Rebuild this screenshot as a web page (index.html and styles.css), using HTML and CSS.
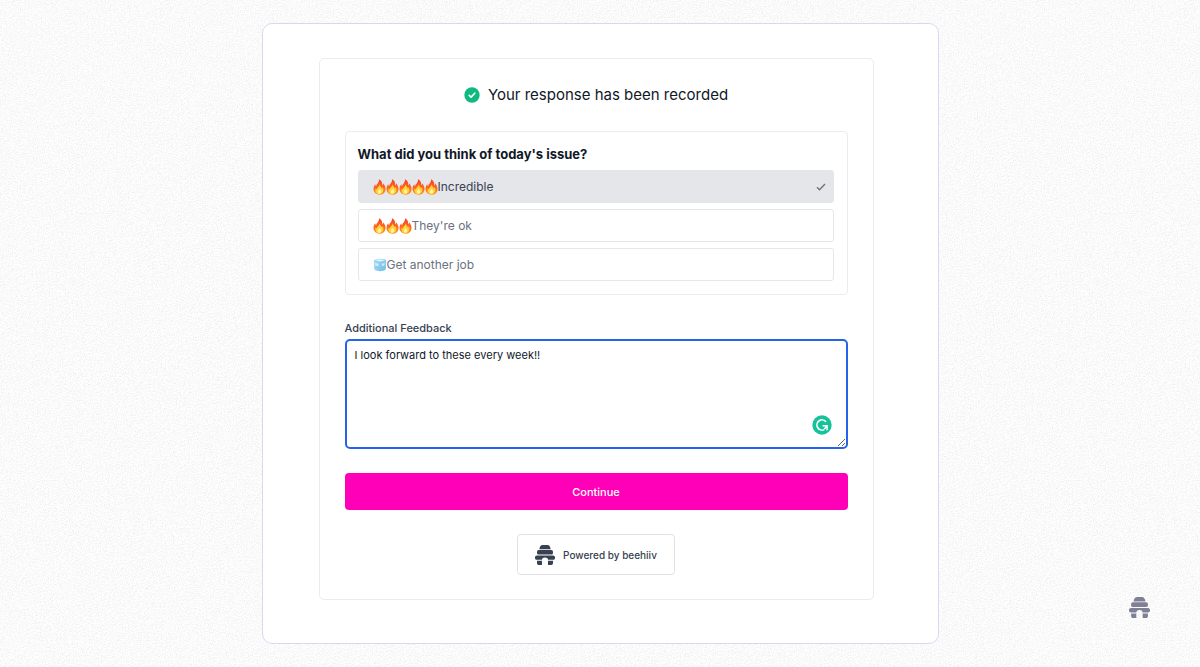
FILE: index.html
```html
<!DOCTYPE html>
<html lang="en">
<head>
    <meta charset="UTF-8">
    <meta name="viewport" content="width=device-width, initial-scale=1.0">
    <title>Your response has been recorded</title>
    <link rel="stylesheet" href="styles.css">
</head>
<body>

    <!-- Shared icons -->
    <svg class="sprite" aria-hidden="true">
        <defs>
            <linearGradient id="flame-fill" x1="0" y1="0" x2="0" y2="1">
                <stop offset="0" stop-color="#f5402c"/>
                <stop offset="0.6" stop-color="#ff6a1f"/>
                <stop offset="1" stop-color="#ff9b1c"/>
            </linearGradient>
            <linearGradient id="ice-fill" x1="0" y1="0" x2="1" y2="1">
                <stop offset="0" stop-color="#c5ebfa"/>
                <stop offset="1" stop-color="#69b9e8"/>
            </linearGradient>
        </defs>
        <symbol id="flame" viewBox="0 0 13 16">
            <path fill="url(#flame-fill)" d="M6 0.3C9 1.8 9.5 4.3 9.2 6.4C10 6 10.2 5 10.1 4.2C11.8 6 12.7 8.2 12.5 10.4C12.2 13.7 9.6 15.7 6.5 15.7C3.2 15.7 0.7 13.5 0.5 10.3C0.4 8.2 1.3 6.4 2.2 5.2C2.3 6.2 2.6 6.9 3.2 7.3C3.3 4.9 6.5 3.7 6 0.3Z"/>
            <path fill="#ffd43a" d="M6.8 5.3C7 7.6 8.5 8.3 9 9.4C9.5 9.1 9.7 8.6 9.8 8.1C11.2 11.2 10.2 15 6.5 15.2C3 15.2 1.8 12 2.8 9.2C3 9.8 3.4 10.2 3.9 10.4C4 8.3 6.5 7.8 6.8 5.3Z"/>
            <path fill="#fff3a8" d="M6.6 10C8.8 12 8.7 14.6 6.5 14.8C4.3 14.6 4.4 12 6.6 10Z"/>
        </symbol>
        <symbol id="ice" viewBox="0 0 14 14">
            <path fill="url(#ice-fill)" d="M2.5 1.2L7 0.7L12 1.2Q13.3 1.6 13.2 3L12.9 10.5Q12.7 12 11.3 12.5L7.2 13.3L2.8 12.4Q1.3 12 1.1 10.5L0.7 3Q0.8 1.6 2.5 1.2Z"/>
            <path fill="#dff5fd" d="M2 2.3L7 1.5L12 2.3L7.2 3.6Z"/>
            <path fill="none" stroke="#7cc0ea" stroke-width="0.8" d="M1 3L7 4.6L13 3M7.1 4.6V12.8M2 8.8L6 9.8M8.4 9.8L12 8.8"/>
            <path fill="#d3effb" d="M2.3 5.2L5.3 5.9V8L2.5 7.3ZM9 6L11.6 5.3L11.4 7.2L9 7.8Z"/>
        </symbol>
        <symbol id="hive" viewBox="0 0 20 20">
            <path d="M7.6 0H12.4C14.2 0 15.2 1.6 15.7 4.2H4.3C4.8 1.6 5.8 0 7.6 0Z"/>
            <rect x="2" y="5.1" width="16" height="4.4" rx="1.6"/>
            <path d="M1.9 10.5H18.1C20.7 10.6 20.7 14.7 18.1 14.8H13.1C12.8 13.3 11.7 12.5 10 12.5S7.2 13.3 6.9 14.8H1.9C-0.7 14.7 -0.7 10.6 1.9 10.5Z"/>
            <path d="M2 15.7H7V20H3.8C2.6 20 2 19.2 2 18ZM13 15.7H18V18C18 19.2 17.4 20 16.2 20H13Z"/>
        </symbol>
    </svg>

    <svg class="grain" aria-hidden="true">
        <filter id="noise" x="0" y="0" width="100%" height="100%">
            <feTurbulence type="fractalNoise" baseFrequency="0.75" numOctaves="3" stitchTiles="stitch"/>
            <feColorMatrix values="0 0 0 0 0.5  0 0 0 0 0.5  0 0 0 0 0.5  0.4 0.4 0 0 -0.33"/>
        </filter>
        <rect width="100%" height="100%" filter="url(#noise)"/>
    </svg>

    <main class="card">
        <form class="panel">
            <h1 class="title">
                <svg class="title-icon" viewBox="0 0 16 16" aria-hidden="true">
                    <circle cx="8" cy="8" r="7.7" fill="#10b981"/>
                    <path d="M5.2 8.3L7.1 10.1L10.8 6.2" fill="none" stroke="#fff" stroke-width="1.6" stroke-linecap="round" stroke-linejoin="round"/>
                </svg>
                Your response has been recorded
            </h1>

            <div class="poll" role="radiogroup" aria-labelledby="question">
                <h2 class="question" id="question">What did you think of today's issue?</h2>
                <div class="options">
                    <label class="option">
                        <input type="radio" name="rating" value="incredible" checked>
                        <svg class="flame"><use href="#flame"/></svg>
                        <svg class="flame"><use href="#flame"/></svg>
                        <svg class="flame"><use href="#flame"/></svg>
                        <svg class="flame"><use href="#flame"/></svg>
                        <svg class="flame"><use href="#flame"/></svg>
                        <span>Incredible</span>
                        <svg class="check" viewBox="0 0 10 8"><path d="M1 4.3L3.5 6.7L9 1.1" fill="none" stroke="currentColor" stroke-width="1.4"/></svg>
                    </label>
                    <label class="option">
                        <input type="radio" name="rating" value="ok">
                        <svg class="flame"><use href="#flame"/></svg>
                        <svg class="flame"><use href="#flame"/></svg>
                        <svg class="flame"><use href="#flame"/></svg>
                        <span>They're ok</span>
                        <svg class="check" viewBox="0 0 10 8"><path d="M1 4.3L3.5 6.7L9 1.1" fill="none" stroke="currentColor" stroke-width="1.4"/></svg>
                    </label>
                    <label class="option">
                        <input type="radio" name="rating" value="bad">
                        <svg class="ice"><use href="#ice"/></svg>
                        <span>Get another job</span>
                        <svg class="check" viewBox="0 0 10 8"><path d="M1 4.3L3.5 6.7L9 1.1" fill="none" stroke="currentColor" stroke-width="1.4"/></svg>
                    </label>
                </div>
            </div>

            <label class="feedback-label" for="feedback">Additional Feedback</label>
            <div class="feedback">
                <textarea id="feedback" name="feedback" spellcheck="false">I look forward to these every week!!</textarea>
                <svg class="checker" viewBox="0 0 20 20" aria-hidden="true">
                    <circle cx="10" cy="10" r="9.7" fill="#15c39a"/>
                    <path d="M14 6.8A5.1 5.1 0 1 0 12.2 14.6" fill="none" stroke="#fff" stroke-width="1.6"/>
                    <path d="M10.6 10.8H15.1V15.2M15 10.8L12.2 14.2" fill="none" stroke="#fff" stroke-width="1.5"/>
                </svg>
            </div>

            <button type="submit" class="submit-btn">Continue</button>

            <a class="powered" href="#">
                <svg class="powered-icon" aria-hidden="true"><use href="#hive"/></svg>
                Powered by beehiiv
            </a>
        </form>
    </main>

    <svg class="watermark" aria-hidden="true"><use href="#hive"/></svg>

</body>
</html>
```
FILE: styles.css
```css
* {
    box-sizing: border-box;
}

body {
    margin: 0;
    padding: 23px;
    min-height: 100vh;
    background-color: #fff;
    font-family: Inter, "Liberation Sans", sans-serif;
    color: #111827;
}

.sprite {
    position: absolute;
    width: 0;
    height: 0;
}

.grain {
    position: fixed;
    top: 0;
    left: 0;
    width: 100%;
    height: 100%;
    z-index: -1;
}

.card {
    max-width: 677px;
    margin: 0 auto;
    padding: 34px 64px 43px 56px;
    background-color: #fff;
    border: 1px solid #d9d7f3;
    border-radius: 10px;
}

.panel {
    display: flex;
    flex-direction: column;
    padding: 25px 25px 24px;
    border: 1px solid #ececee;
    border-radius: 5px;
}

.title {
    display: flex;
    align-items: center;
    justify-content: center;
    gap: 8px;
    margin: 0 0 25px;
    font-size: 15px;
    font-weight: 400;
    line-height: 22px;
}

.title-icon {
    width: 16px;
    height: 16px;
}

/* Poll */
.poll {
    padding: 12px 13px 13px 12px;
    border: 1px solid #ececee;
    border-radius: 4px;
    margin-bottom: 24px;
}

.question {
    margin: 0 0 6px;
    font-size: 13px;
    font-weight: 700;
    line-height: 20px;
}

.options {
    display: flex;
    flex-direction: column;
    gap: 6px;
}

.option {
    display: flex;
    align-items: center;
    height: 33px;
    padding: 0 7px 0 14px;
    border: 1px solid #e5e7eb;
    border-radius: 3px;
    font-size: 12px;
    color: #6b7280;
    cursor: pointer;
}

.option input {
    position: absolute;
    opacity: 0;
    margin: 0;
}

.option:has(input:checked) {
    background-color: #e5e6ea;
    border-color: #e5e6ea;
    color: #374151;
}

.flame {
    width: 13px;
    height: 16px;
}

.ice {
    width: 14px;
    height: 14px;
}

.check {
    display: none;
    width: 10px;
    height: 8px;
    margin-left: auto;
    color: #6b7280;
}

input:checked ~ .check {
    display: block;
}

/* Feedback */
.feedback-label {
    margin-bottom: 2px;
    font-size: 11px;
    font-weight: 500;
    line-height: 18px;
    color: #374151;
}

.feedback {
    position: relative;
    margin-bottom: 24px;
}

textarea {
    display: block;
    width: 100%;
    height: 110px;
    padding: 6px 8px;
    border: 2px solid #2563eb;
    border-radius: 5px;
    outline: none;
    resize: vertical;
    font-family: inherit;
    font-size: 11px;
    line-height: 16px;
    color: #111827;
}

.checker {
    position: absolute;
    right: 16px;
    bottom: 14px;
    width: 20px;
    height: 20px;
}

.submit-btn {
    height: 37px;
    margin-bottom: 24px;
    background-color: #ff00b8;
    color: #fff;
    border: none;
    border-radius: 4px;
    font-family: inherit;
    font-size: 11px;
    font-weight: 500;
    cursor: pointer;
}

.powered {
    display: flex;
    align-items: center;
    align-self: center;
    gap: 8px;
    height: 41px;
    padding: 0 17px;
    border: 1px solid #dfe1e6;
    border-radius: 4px;
    font-size: 10px;
    font-weight: 500;
    color: #374151;
    text-decoration: none;
}

.powered-icon {
    width: 20px;
    height: 20px;
    fill: #374151;
}

.watermark {
    position: fixed;
    right: 50px;
    bottom: 49px;
    width: 21px;
    height: 21px;
    fill: #7f8096;
}
```
